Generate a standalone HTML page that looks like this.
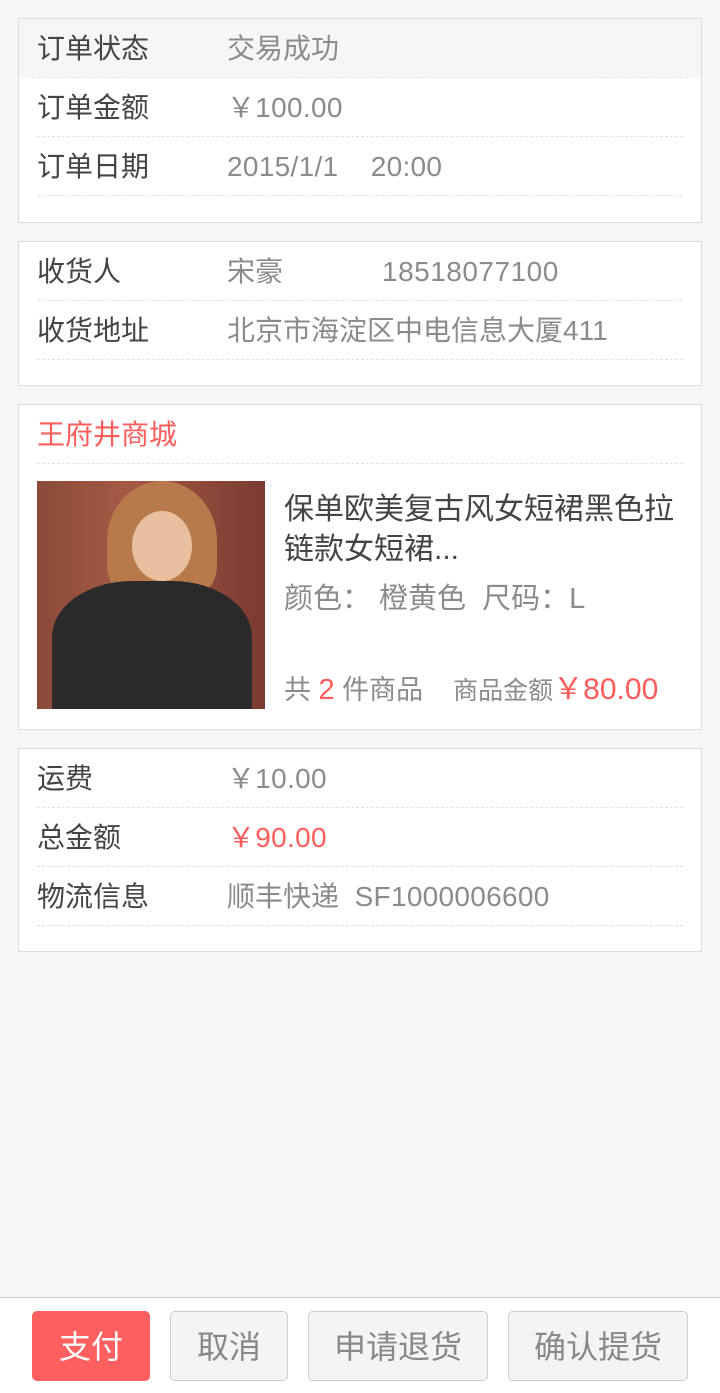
<!DOCTYPE html>
<html><head><meta charset="utf-8"><style>
*{margin:0;padding:0;box-sizing:border-box}
body{width:720px;height:1393px;background:#f7f7f7;font-family:"Liberation Sans","Noto Sans CJK SC",sans-serif;position:relative;overflow:hidden}
.card{position:absolute;left:18px;width:684px;background:#fff;border:1px solid #dcdcdc}
.row{position:absolute;left:18px;right:18px;height:59px;border-bottom:1px dashed #e2e2e2;font-size:28px;line-height:60px;color:#444}
.row .v{position:absolute;left:190px;top:0;color:#8e8a8c}
.n{letter-spacing:0.3px}
.red{color:#ff5c5c!important}
.btn{position:absolute;top:1311px;height:70px;border:1px solid #ccc;border-radius:5px;background:#f5f4f5;color:#888;font-size:32px;line-height:70px;text-align:center}
</style></head><body>
<div class="card" style="top:18px;height:205px">
 <div style="position:absolute;left:0;right:0;top:0;height:59px;background:#f6f6f6"></div>
 <div class="row" style="top:0">订单状态<span class="v">交易成功</span></div>
 <div class="row" style="top:59px">订单金额<span class="v n">￥100.00</span></div>
 <div class="row" style="top:118px">订单日期<span class="v n" style="white-space:nowrap">2015/1/1&nbsp;&nbsp;&nbsp;&nbsp;20:00</span></div>
</div>
<div class="card" style="top:241px;height:145px">
 <div class="row" style="top:0">收货人<span class="v">宋豪<span class="n" style="position:absolute;left:155px;white-space:nowrap;letter-spacing:0.5px">18518077100</span></span></div>
 <div class="row" style="top:59px">收货地址<span class="v" style="white-space:nowrap">北京市海淀区中电信息大厦411</span></div>
</div>
<div class="card" style="top:404px;height:326px">
 <div class="row red" style="top:0;color:#ff5c5c">王府井商城</div>
 <div style="position:absolute;left:18px;top:76px;width:228px;height:228px;background:linear-gradient(90deg,#8a4a3a 0%,#a55a45 40%,#7a3a30 100%);overflow:hidden">
  <div style="position:absolute;left:70px;top:0;width:110px;height:120px;border-radius:50% 50% 30% 30%;background:#b87a4a"></div>
  <div style="position:absolute;left:95px;top:30px;width:60px;height:70px;border-radius:50%;background:#e8c0a0"></div>
  <div style="position:absolute;left:15px;top:100px;width:200px;height:140px;border-radius:40% 40% 0 0;background:#2a2a2a"></div>
 </div>
 <div style="position:absolute;left:265px;top:85px;width:400px;font-size:30px;line-height:40px;color:#444">保单欧美复古风女短裙黑色拉链款女短裙...</div>
 <div style="position:absolute;left:265px;top:170px;font-size:29px;color:#8e8a8c;white-space:nowrap">颜色： 橙黄色&nbsp; 尺码：L</div>
 <div style="position:absolute;left:265px;top:259px;font-size:27px;color:#8e8a8c;white-space:nowrap">共 <span class="red" style="font-size:29px">2</span> 件商品 &nbsp;&nbsp; <span style="font-size:25px">商品金额</span><span class="red" style="font-size:30px">￥80.00</span></div>
</div>
<div class="card" style="top:748px;height:204px">
 <div class="row" style="top:0">运费<span class="v n">￥10.00</span></div>
 <div class="row" style="top:59px">总金额<span class="v n red">￥90.00</span></div>
 <div class="row" style="top:118px">物流信息<span class="v" style="white-space:nowrap">顺丰快递&nbsp; <span class="n">SF1000006600</span></span></div>
</div>
<div style="position:absolute;left:0;top:1297px;width:720px;height:96px;background:#fff;border-top:1px solid #ccc"></div>
<div class="btn" style="left:32px;width:118px;background:#ff5f5f;border-color:#ff5f5f;color:#fff">支付</div>
<div class="btn" style="left:170px;width:118px">取消</div>
<div class="btn" style="left:308px;width:180px">申请退货</div>
<div class="btn" style="left:508px;width:180px">确认提货</div>
</body></html>
